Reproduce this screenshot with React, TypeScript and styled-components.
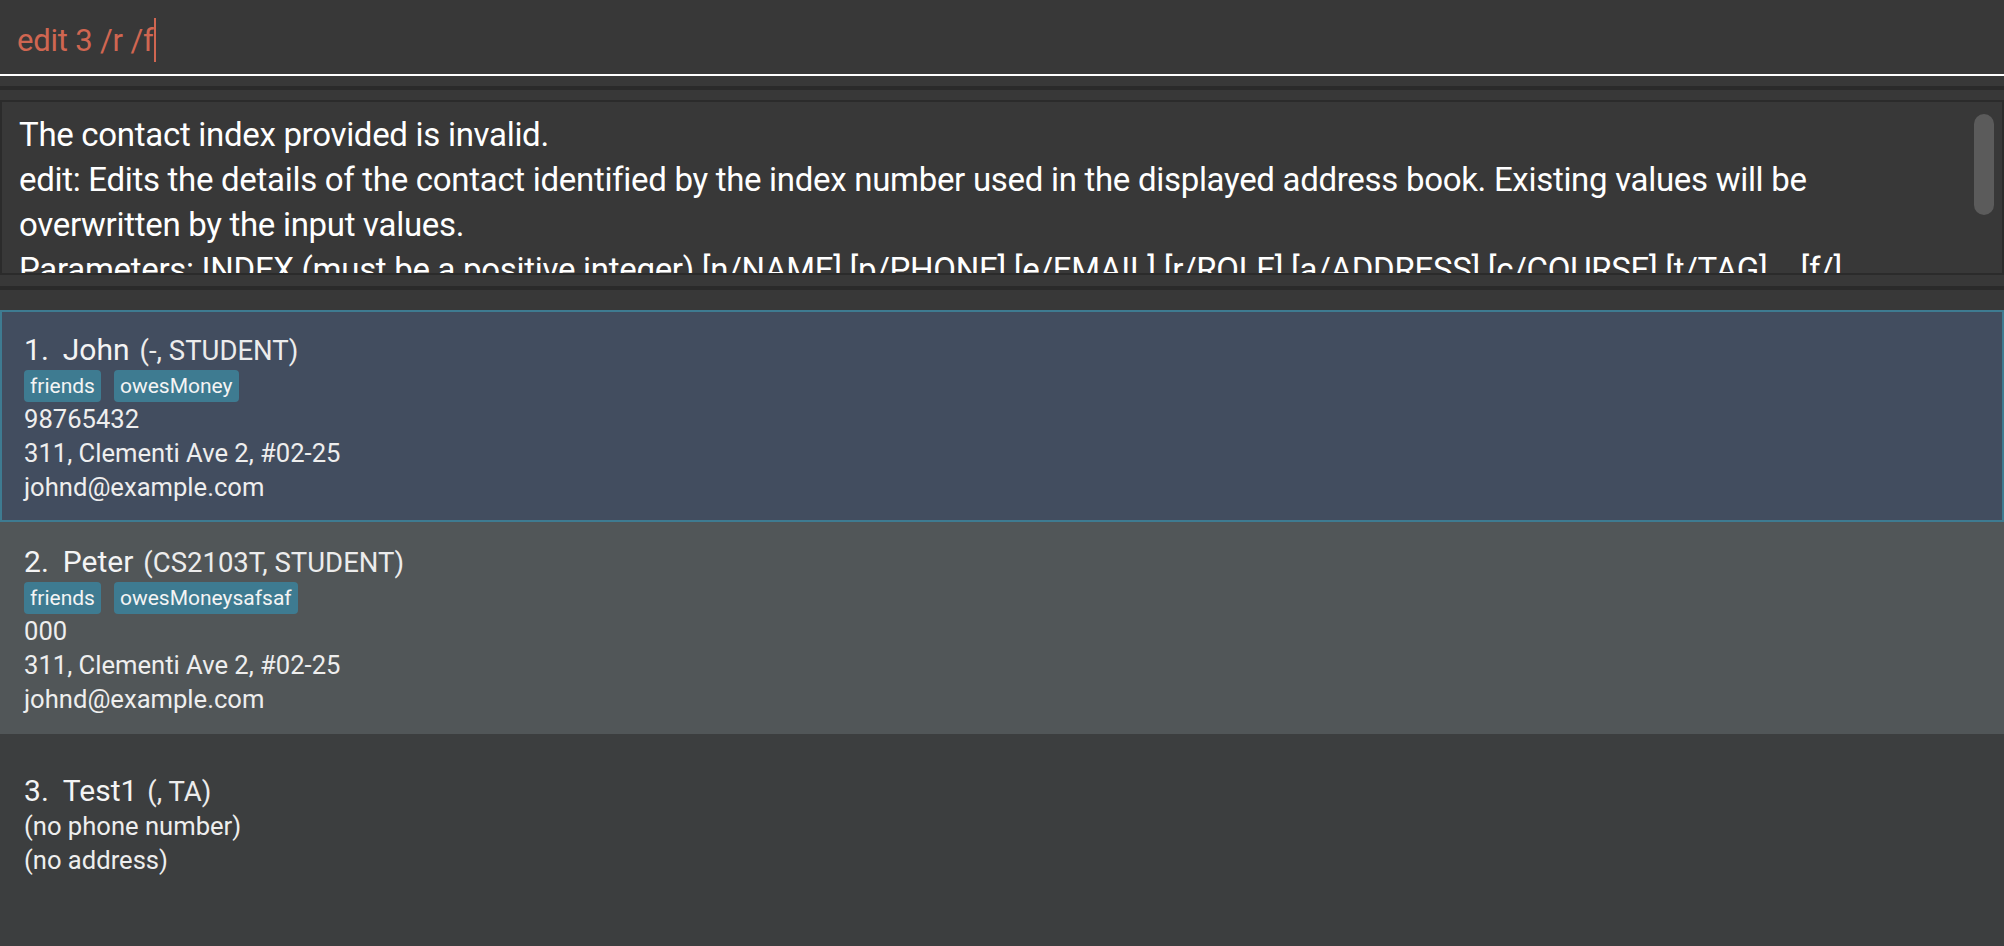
import styled, { createGlobalStyle } from "styled-components";

type Person = {
  name: string;
  role: string;
  tags: string[];
  phone: string;
  address: string;
  email: string;
};

const persons: Person[] = [
  {
    name: "John",
    role: "(-, STUDENT)",
    tags: ["friends", "owesMoney"],
    phone: "98765432",
    address: "311, Clementi Ave 2, #02-25",
    email: "johnd@example.com",
  },
  {
    name: "Peter",
    role: "(CS2103T, STUDENT)",
    tags: ["friends", "owesMoneysafsaf"],
    phone: "000",
    address: "311, Clementi Ave 2, #02-25",
    email: "johnd@example.com",
  },
  {
    name: "Test1",
    role: "(, TA)",
    tags: [],
    phone: "(no phone number)",
    address: "(no address)",
    email: "",
  },
];

const feedback =
  "The contact index provided is invalid.\n" +
  "edit: Edits the details of the contact identified by the index number used in the displayed address book. Existing values will be overwritten by the input values.\n" +
  "Parameters: INDEX (must be a positive integer) [n/NAME] [p/PHONE] [e/EMAIL] [r/ROLE] [a/ADDRESS] [c/COURSE] [t/TAG]... [f/]\n" +
  "Example: edit 1 p/91234567 e/johndoe@example.com";

const GlobalStyle = createGlobalStyle`
  html, body {
    margin: 0;
    padding: 0;
    background: #383838;
  }
  body {
    font-family: Roboto, "Liberation Sans", sans-serif;
    -webkit-font-smoothing: antialiased;
  }
`;

const App = () => {
  return (
    <>
      <GlobalStyle />
      <Window>
        <CommandPane>
          <CommandField>
            <CommandText>edit 3 /r /f</CommandText>
            <Caret />
          </CommandField>
        </CommandPane>
        <Divider />
        <ResultPane>
          <ResultBox>
            <ResultText>{feedback}</ResultText>
            <ScrollThumb />
          </ResultBox>
        </ResultPane>
        <Divider />
        <ListPane>
          {persons.map((p, i) => (
            <Card key={p.name} $selected={i === 0} $odd={i % 2 === 1}>
              <NameRow>
                <Index>{i + 1}.</Index>
                <Name>{p.name}</Name>
                <Role>{p.role}</Role>
              </NameRow>
              {p.tags.length > 0 && (
                <Tags>
                  {p.tags.map((t) => (
                    <Tag key={t}>{t}</Tag>
                  ))}
                </Tags>
              )}
              <Detail>{p.phone}</Detail>
              <Detail>{p.address}</Detail>
              <Detail>{p.email}</Detail>
            </Card>
          ))}
        </ListPane>
      </Window>
    </>
  );
};

export default App;

const Window = styled.div`
  width: 2004px;
  height: 946px;
  overflow: hidden;
  display: flex;
  flex-direction: column;
  background: #383838;
`;

const CommandPane = styled.div`
  padding-bottom: 10px;
`;

const CommandField = styled.div`
  height: 74px;
  box-sizing: content-box;
  border-bottom: 2px solid #ffffff;
  display: flex;
  align-items: flex-start;
  padding: 0 0 0 17px;
`;

const CommandText = styled.span`
  margin-top: 19px;
  font-size: 31px;
  line-height: 44px;
  letter-spacing: -0.2px;
  color: #d06651;
  white-space: pre;
`;

const Caret = styled.span`
  margin-top: 18px;
  width: 2px;
  height: 44px;
  background: #d06651;
`;

const Divider = styled.div`
  height: 4px;
  flex-shrink: 0;
  background: #2a2a2a;
`;

const ResultPane = styled.div`
  padding: 10px 0 11px;
`;

const ResultBox = styled.div`
  position: relative;
  height: 175px;
  box-sizing: border-box;
  border: 2px solid #2b2b2b;
  overflow: hidden;
`;

const ResultText = styled.div`
  padding: 10px 45px 0 17px;
  font-size: 33px;
  line-height: 45px;
  letter-spacing: -0.3px;
  color: #ffffff;
  white-space: pre-wrap;
`;

const ScrollThumb = styled.div`
  position: absolute;
  top: 12px;
  right: 8px;
  width: 20px;
  height: 101px;
  border-radius: 10px;
  background: #5b5b5b;
`;

const ListPane = styled.div`
  padding-top: 20px;
  display: flex;
  flex-direction: column;
`;

const Card = styled.div<{ $selected: boolean; $odd: boolean }>`
  height: 212px;
  flex-shrink: 0;
  box-sizing: border-box;
  display: flex;
  flex-direction: column;
  justify-content: center;
  padding-top: 2px;
  padding-left: ${(p) => (p.$selected ? "22px" : "24px")};
  border: ${(p) => (p.$selected ? "2px solid #3e7b91" : "none")};
  background: ${(p) =>
    p.$selected ? "#424d5f" : p.$odd ? "#515658" : "#3c3e3f"};
  color: #eeeeee;
`;

const NameRow = styled.div`
  height: 38px;
  display: flex;
  align-items: baseline;
  padding-top: 2px;
  box-sizing: border-box;
`;

const Index = styled.span`
  font-size: 30px;
  line-height: 36px;
  color: #f4f4f4;
`;

const Name = styled.span`
  margin-left: 14px;
  font-size: 30px;
  line-height: 36px;
  color: #f4f4f4;
`;

const Role = styled.span`
  margin-left: 10px;
  font-size: 27.5px;
  color: #ececec;
`;

const Tags = styled.div`
  display: flex;
  gap: 13px;
  height: 32px;
  margin-top: 2px;
`;

const Tag = styled.span`
  padding: 0 6px;
  height: 32px;
  line-height: 32px;
  font-size: 21px;
  border-radius: 4px;
  background: #3e7b91;
  color: #f4f4f4;
`;

const Detail = styled.div`
  min-height: 34px;
  font-size: 25.6px;
  line-height: 34px;
  color: #eeeeee;
`;
